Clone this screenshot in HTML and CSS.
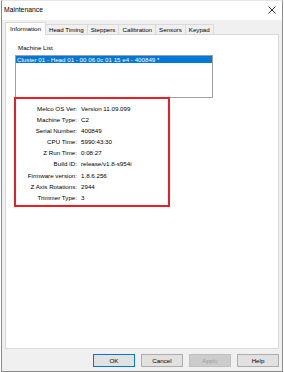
FILE: index.html
```html
<!DOCTYPE html>
<html>
<head>
    <meta charset="UTF-8">
    <title>Maintenance</title>
    <link rel="stylesheet" href="styles.css">
</head>
<body>
    <div class="window">
        <div class="titlebar">
            <span class="title">Maintenance</span>
            <svg class="close" width="8" height="8" viewBox="0 0 8 8">
                <path d="M0.5 0.5 L7.5 7.5 M7.5 0.5 L0.5 7.5" stroke="#333" stroke-width="1" fill="none"/>
            </svg>
        </div>

        <div class="tabs">
            <div class="tab active">Information</div>
            <div class="tab">Head Timing</div>
            <div class="tab">Steppers</div>
            <div class="tab">Calibration</div>
            <div class="tab">Sensors</div>
            <div class="tab">Keypad</div>
        </div>

        <div class="panel">
            <div class="list-label">Machine List</div>
            <div class="listbox">
                <div class="list-item selected">Cluster 01 - Head 01 - 00 06 0c 01 15 e4 - 400849 *</div>
            </div>

            <div class="info-box">
                <div class="info-label">Melco OS Ver:</div><div class="info-value">Version 11.09.099</div>
                <div class="info-label">Machine Type:</div><div class="info-value">C2</div>
                <div class="info-label">Serial Number:</div><div class="info-value">400849</div>
                <div class="info-label">CPU Time:</div><div class="info-value">5990:43:30</div>
                <div class="info-label">Z Run Time:</div><div class="info-value">0:08:27</div>
                <div class="info-label">Build ID:</div><div class="info-value">release/v1.8-s954i</div>
                <div class="info-label">Firmware version:</div><div class="info-value">1.8.6.256</div>
                <div class="info-label">Z Axis Rotations:</div><div class="info-value">2944</div>
                <div class="info-label">Trimmer Type:</div><div class="info-value">3</div>
            </div>
        </div>

        <div class="buttons">
            <button class="btn default">OK</button>
            <button class="btn">Cancel</button>
            <button class="btn" disabled>Apply</button>
            <button class="btn">Help</button>
        </div>
    </div>
</body>
</html>
```

FILE: styles.css
```css
body {
    margin: 0;
    background-color: #ffffff;
    font-family: "Liberation Sans", Arial, sans-serif;
    font-size: 6.2px;
    color: #000;
}
.window {
    margin-left: 1px;
    width: 282px;
    height: 372px;
    box-sizing: border-box;
    border: 1px solid #8c8c8c;
    border-top-color: #e6e6e6;
    background-color: #f0f0f0;
    display: flex;
    flex-direction: column;
    padding: 0 3px;
}
.titlebar {
    height: 17px;
    margin: 0 -3px;
    background-color: #ffffff;
    display: flex;
    align-items: center;
    justify-content: space-between;
    padding: 0 6px 2px 2px;
}
.title {
    font-size: 6.8px;
}
.tabs {
    display: flex;
    align-items: flex-end;
    margin-top: 2px;
    height: 12px;
    position: relative;
    z-index: 1;
}
.tab {
    height: 10px;
    line-height: 10px;
    padding: 0 3px;
    border: 1px solid #d9d9d9;
    border-bottom: none;
    margin-right: -1px;
    box-sizing: border-box;
    background-color: #f0f0f0;
}
.tab.active {
    height: 12px;
    line-height: 11px;
    padding: 0 4px;
    background-color: #ffffff;
    margin-bottom: -1px;
    height: 13px;
}
.panel {
    flex: 1;
    background-color: #ffffff;
    border: 1px solid #d9d9d9;
    padding: 9px 0 0 9px;
    display: flex;
    flex-direction: column;
    align-items: flex-start;
}
.list-label {
    margin-left: 3px;
    line-height: 8px;
    height: 8px;
}
.listbox {
    margin-top: 3px;
    width: 198px;
    height: 43px;
    box-sizing: border-box;
    border: 1px solid #a0a0a0;
    background-color: #ffffff;
}
.list-item {
    height: 7px;
    line-height: 7px;
    padding-left: 1px;
    white-space: nowrap;
}
.list-item.selected {
    background-color: #0078d7;
    color: #ffffff;
}
.info-box {
    margin: -1px 0 0 -1px;
    width: 156px;
    height: 110px;
    box-sizing: border-box;
    border: 2px solid #ee1c25;
    padding: 4px 0 0 0;
    display: grid;
    grid-template-columns: 61px auto;
    column-gap: 4px;
    grid-auto-rows: 11.1px;
    align-content: start;
}
.info-label {
    text-align: right;
    line-height: 11px;
    white-space: nowrap;
}
.info-value {
    line-height: 11px;
    white-space: nowrap;
}
.buttons {
    display: flex;
    justify-content: flex-end;
    gap: 6px;
    padding: 5px 0 4px;
}
.btn {
    width: 42px;
    height: 13px;
    box-sizing: border-box;
    border: 1px solid #adadad;
    background-color: #e1e1e1;
    font-family: "Liberation Sans", Arial, sans-serif;
    font-size: 6.2px;
    color: #000;
    padding: 0;
}
.btn.default {
    border-color: #0078d7;
}
.btn:disabled {
    background-color: #cccccc;
    border-color: #bfbfbf;
    color: #a0a0a0;
}
```
